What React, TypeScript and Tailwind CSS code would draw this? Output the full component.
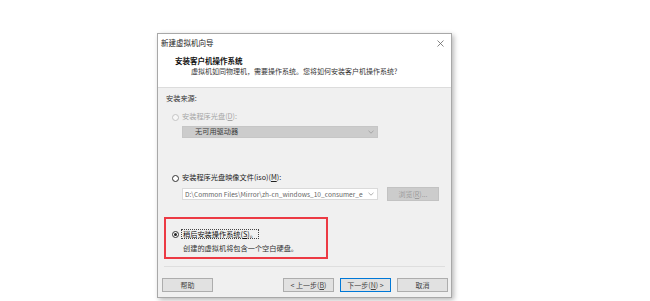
import React from "react";

const font = { fontFamily: '"Noto Sans CJK SC", "Noto Sans", sans-serif' };

type RadioProps = { checked?: boolean; disabled?: boolean };

const Radio = ({ checked, disabled }: RadioProps) => (
  <span
    className={`flex h-[7px] w-[7px] shrink-0 items-center justify-center rounded-full border ${
      disabled ? "border-[#c4c4c4] bg-[#f7f7f7]" : "border-[#333] bg-white"
    }`}
  >
    {checked && <span className="h-[3px] w-[3px] rounded-full bg-[#222]" />}
  </span>
);

const Chevron = ({ color }: { color: string }) => (
  <svg width="6" height="4" viewBox="0 0 6 4" className="shrink-0">
    <path d="M0.5 0.8 L3 3.2 L5.5 0.8" fill="none" stroke={color} strokeWidth="0.8" />
  </svg>
);

const Key = ({ k }: { k: string }) => (
  <>
    (<span className="underline underline-offset-1">{k}</span>)
  </>
);

const WizButton = ({
  children,
  focused,
  className = "",
}: {
  children: React.ReactNode;
  focused?: boolean;
  className?: string;
}) => (
  <button
    className={`flex h-[14px] w-[51px] items-center justify-center whitespace-nowrap border bg-[#e1e1e1] text-[7px] leading-none text-[#444] ${
      focused ? "border-[#0078d7]" : "border-[#adadad]"
    } ${className}`}
  >
    {children}
  </button>
);

export default function App() {
  return (
    <div className="min-h-screen bg-white pl-[157px] pt-[33px]" style={font}>
      <div className="flex h-[265px] w-[295px] flex-col border border-[#a8a8a8] bg-[#f0f0f0] shadow-[2px_2px_5px_rgba(0,0,0,0.28)]">
        {/* header */}
        <div className="h-[54px] shrink-0 border-b border-[#dcdcdc] bg-white">
          <div className="flex h-[18px] items-center justify-between pl-[3px] pr-[7px]">
            <span className="text-[7.5px] leading-none text-[#222]">新建虚拟机向导</span>
            <svg width="7" height="7" viewBox="0 0 7 7">
              <path d="M0.5 0.5 L6.5 6.5 M6.5 0.5 L0.5 6.5" stroke="#666" strokeWidth="0.8" />
            </svg>
          </div>
          <div className="mt-[4px] h-[10px] pl-[17px] text-[7.5px] font-bold leading-[10px] text-[#111]">
            安装客户机操作系统
          </div>
          <div className="h-[10px] pl-[33px] text-[7px] leading-[10px] text-[#333]">
            虚拟机如同物理机，需要操作系统。您将如何安装客户机操作系统?
          </div>
        </div>

        {/* body */}
        <div className="flex flex-1 flex-col">
          <div className="mt-[5px] h-[10px] pl-[8px] text-[7.2px] leading-[10px] text-[#333]">
            安装来源:
          </div>

          <div className="mt-[9px] flex h-[10px] items-center gap-[3px] pl-[14px]">
            <Radio disabled />
            <span className="text-[7.2px] leading-none text-[#a6a6a6]">
              安装程序光盘<Key k="D" />:
            </span>
          </div>

          <div className="ml-[24px] mt-[4px] flex h-[12px] w-[196px] items-center justify-between border border-[#c6c6c6] bg-[#cccccc] pl-[12px] pr-[3px]">
            <span className="text-[7.2px] leading-none text-[#3a3a3a]">无可用驱动器</span>
            <Chevron color="#9a9a9a" />
          </div>

          <div className="mt-[35px] flex h-[10px] items-center gap-[3px] pl-[14px]">
            <Radio />
            <span className="text-[7.2px] leading-none text-[#222]">
              安装程序光盘映像文件(iso)<Key k="M" />:
            </span>
          </div>

          <div className="mt-[4px] flex h-[14px] items-center pl-[24px]">
            <div className="flex h-[12px] w-[196px] items-center justify-between border border-[#dadada] bg-white pl-[2px] pr-[3px]">
              <span className="h-[10px] w-[182px] overflow-hidden whitespace-nowrap text-[6.6px] leading-[10px] text-[#666]">
                D:\Common Files\Mirror\zh-cn_windows_10_consumer_e
              </span>
              <Chevron color="#9a9a9a" />
            </div>
            <div className="ml-[9px] flex h-[14px] w-[52px] items-center justify-center whitespace-nowrap border border-[#c2c2c2] bg-[#cccccc] text-[7px] leading-none text-[#9c9c9c]">
              浏览<Key k="R" />...
            </div>
          </div>

          <div className="ml-[6px] mt-[16px] h-[42px] w-[164px] border-2 border-[#ec3a44] pl-[6px] pt-[10px]">
            <div className="flex h-[10px] items-center gap-[2px]">
              <Radio checked />
              <span className="border border-dotted border-[#444] px-[1px] text-[7.2px] leading-[8px] text-[#111]">
                稍后安装操作系统<Key k="S" />。
              </span>
            </div>
            <div className="ml-[11px] mt-[4px] h-[10px] text-[7.2px] leading-[10px] text-[#333]">
              创建的虚拟机将包含一个空白硬盘。
            </div>
          </div>

          <div className="mx-[6px] mt-[7px] h-px bg-[#dedede]" />

          <div className="mt-[11px] flex items-center pl-[4px]">
            <WizButton>帮助</WizButton>
            <WizButton className="ml-[70px] w-[50px]">
              &lt; 上一步<Key k="B" />
            </WizButton>
            <WizButton focused className="ml-[6px]">
              下一步<Key k="N" /> &gt;
            </WizButton>
            <WizButton className="ml-[6px]">取消</WizButton>
          </div>
        </div>
      </div>
    </div>
  );
}
